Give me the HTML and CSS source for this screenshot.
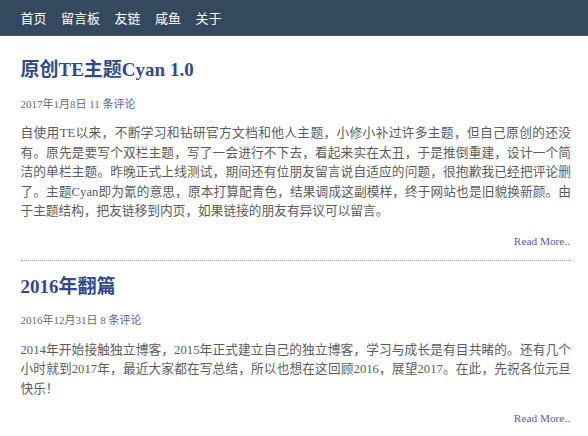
FILE: index.html
```html
<!DOCTYPE html>
<html lang="zh-CN">
<head>
<meta charset="utf-8">
<title>Cyan</title>
<link rel="stylesheet" href="styles.css">
</head>
<body>
<header class="nav">
  <a class="nav-item" href="#">首页</a>
  <a class="nav-item" href="#">留言板</a>
  <a class="nav-item" href="#">友链</a>
  <a class="nav-item" href="#">咸鱼</a>
  <a class="nav-item" href="#">关于</a>
</header>
<main class="main">
  <article class="post">
    <h2 class="post-title"><a href="#">原创TE主题Cyan 1.0</a></h2>
    <div class="post-meta">2017年1月8日 11 <a href="#">条评论</a></div>
    <p class="post-body">自使用TE以来，不断学习和钻研官方文档和他人主题，小修小补过许多主题，但自己原创的还没有。原先是要写个双栏主题，写了一会进行不下去，看起来实在太丑，于是推倒重建，设计一个简洁的单栏主题。昨晚正式上线测试，期间还有位朋友留言说自适应的问题，很抱歉我已经把评论删了。主题Cyan即为氰的意思，原本打算配青色，结果调成这副模样，终于网站也是旧貌换新颜。由于主题结构，把友链移到内页，如果链接的朋友有异议可以留言。</p>
    <div class="more"><a href="#">Read More..</a></div>
  </article>
  <article class="post">
    <h2 class="post-title"><a href="#">2016年翻篇</a></h2>
    <div class="post-meta">2016年12月31日 8 <a href="#">条评论</a></div>
    <p class="post-body">2014年开始接触独立博客，2015年正式建立自己的独立博客，学习与成长是有目共睹的。还有几个小时就到2017年，最近大家都在写总结，所以也想在这回顾2016，展望2017。在此，先祝各位元旦快乐！</p>
    <div class="more"><a href="#">Read More..</a></div>
  </article>
</main>
</body>
</html>
```
FILE: styles.css
```css
html, body {
  margin: 0;
  padding: 0;
  background: #fff;
}
body {
  font-family: "Liberation Serif", "Noto Sans CJK SC", serif;
  color: #5c5c5c;
}
a {
  text-decoration: none;
}
.nav {
  height: 36px;
  background: #35495e;
  border-bottom: 1px solid #4a5560;
  box-sizing: border-box;
  display: flex;
  align-items: center;
  padding-left: 20.5px;
  gap: 14.5px;
}
.nav-item {
  color: #fff;
  font-family: "Noto Sans CJK SC", sans-serif;
  font-size: 13px;
  line-height: 36px;
}
.main {
  padding: 8px 17px 0 20.5px;
}
.post {
  padding-top: 12px;
  padding-bottom: 10px;
  border-bottom: 1px dotted #9a9a9a;
}
.post-title {
  margin: 0;
  font-size: 19px;
  line-height: 28px;
  font-weight: bold;
}
.post-title a {
  color: #2f4a8c;
}
.post-meta {
  margin-top: 9.5px;
  font-size: 11px;
  line-height: 20px;
  color: #6a6a6a;
}
.post-meta a {
  color: #5363a8;
}
.post-body {
  margin: 10.5px 0 0;
  font-size: 12.7px;
  line-height: 19.5px;
  text-align: justify;
  color: #5c5c5c;
}
.more {
  margin-top: 10px;
  text-align: right;
  font-size: 11.3px;
  line-height: 18px;
  padding-right: 1px;
}
.more a {
  color: #5a5e9e;
}
```
